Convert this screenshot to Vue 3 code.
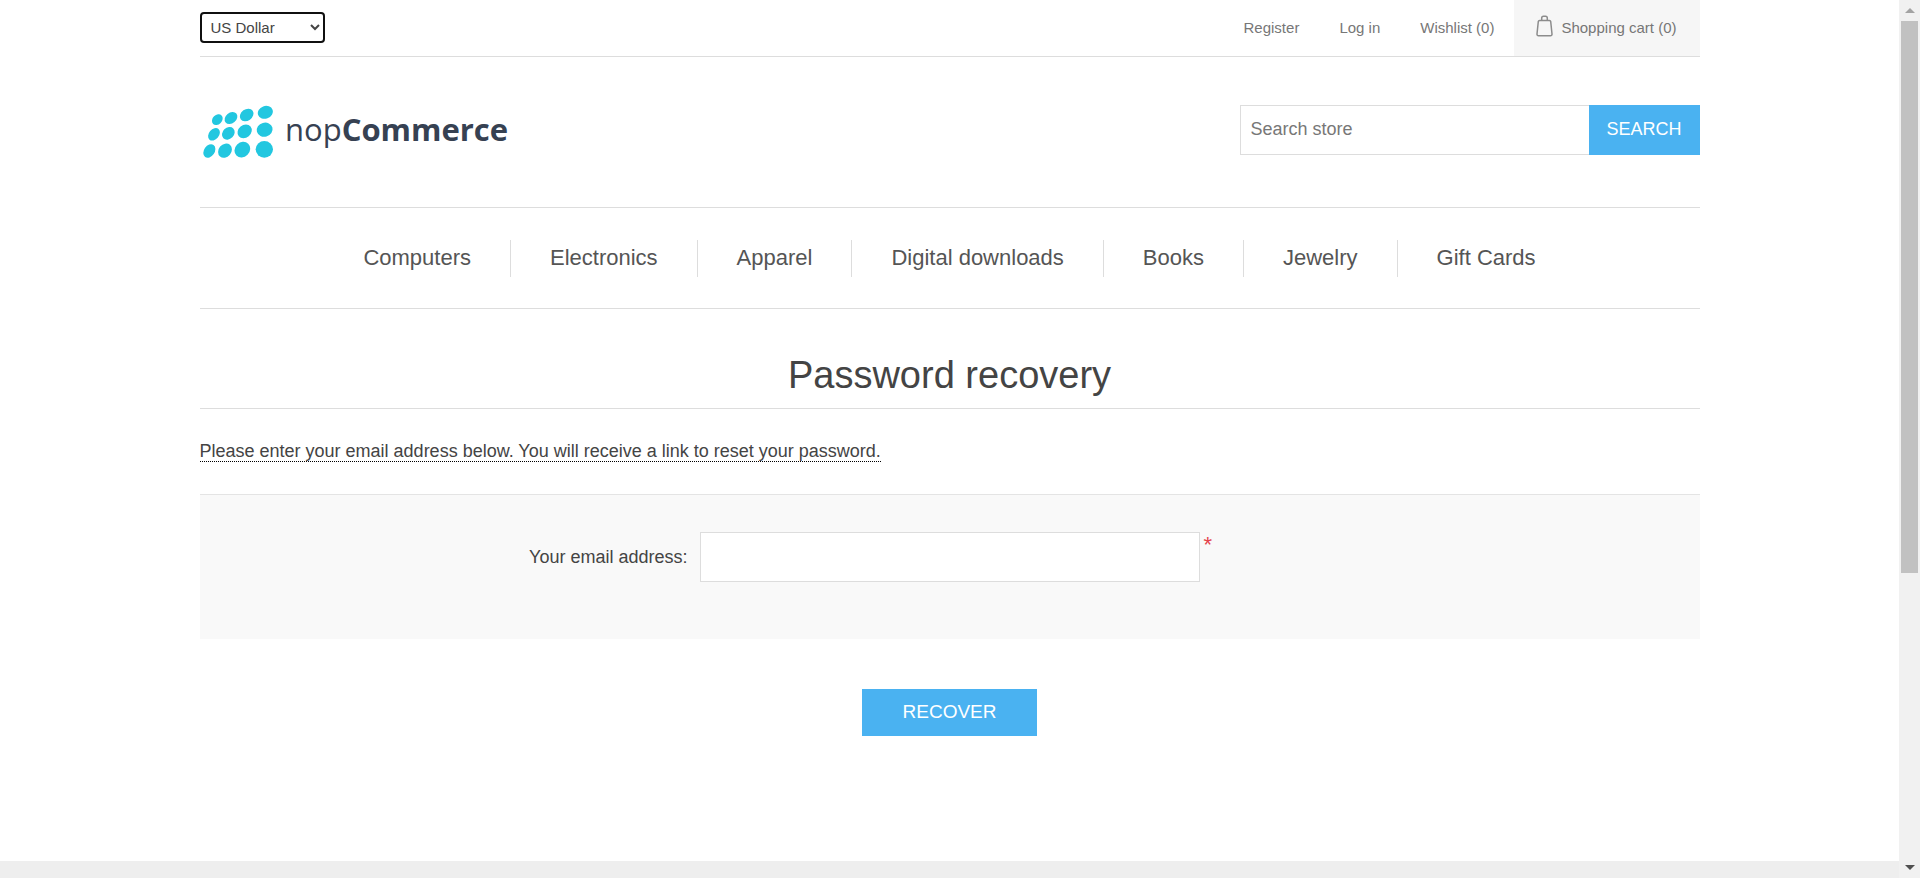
<script setup>
import { ref } from 'vue'

const currency = ref('US Dollar')
const query = ref('')
const email = ref('')

const categories = ['Computers', 'Electronics', 'Apparel', 'Digital downloads', 'Books', 'Jewelry', 'Gift Cards']

// Logo dots: cx, cy, rx, ry, rotation
const dots = [
  [64, 71, 18, 14, -45], [105, 66, 21, 16, -40], [152, 57, 22, 17, -35], [208, 49, 23, 19, -20],
  [54, 115, 21, 15, -50], [97, 112, 21, 17, -45], [146, 106, 23, 19, -40], [206, 101, 24, 21, -15],
  [40, 165, 22, 16, -55], [87, 164, 23, 19, -50], [139, 161, 25, 22, -45], [205, 160, 26, 25, 0],
]
</script>

<template>
  <div class="window">
    <div class="page">
      <div class="wrapper">
        <div class="topbar">
          <select v-model="currency" class="currency" aria-label="Currency selector">
            <option>US Dollar</option>
            <option>Euro</option>
          </select>
          <nav class="links" aria-label="Account">
            <a href="#">Register</a>
            <a href="#">Log in</a>
            <a href="#">Wishlist (0)</a>
            <a href="#" class="cart">
              <svg class="bag" viewBox="0 0 17 22" aria-hidden="true">
                <path d="M3.5 5.5h10q1 0 1.2 1L16 19q.1 1.8-1.6 1.8H2.6Q.9 20.800 1 19L2.300 6.500q.2-1 1.200-1z" />
                <path d="M5.700 5.500V3q0-1.800 1.800-1.800h2q1.800 0 1.800 1.800v2.500" />
              </svg>
              <span>Shopping cart (0)</span>
            </a>
          </nav>
        </div>

        <header class="header">
          <a href="#" class="logo" aria-label="nopCommerce">
            <svg viewBox="12 27 936 162">
              <g fill="#22c7e0">
                <ellipse
                  v-for="(d, i) in dots"
                  :key="i"
                  :cx="d[0]"
                  :cy="d[1]"
                  :rx="d[2]"
                  :ry="d[3]"
                  :transform="`rotate(${d[4]} ${d[0]} ${d[1]})`"
                />
              </g>
              <text x="267" y="134" class="brand">nop<tspan class="strong">Commerce</tspan></text>
            </svg>
          </a>
          <form class="search" @submit.prevent>
            <input v-model="query" type="text" placeholder="Search store" aria-label="Search store">
            <button type="submit">SEARCH</button>
          </form>
        </header>

        <nav class="menu" aria-label="Categories">
          <ul>
            <li v-for="c in categories" :key="c"><a href="#">{{ c }}</a></li>
          </ul>
        </nav>

        <main>
          <h1>Password recovery</h1>
          <p class="tooltip"><span>Please enter your email address below. You will receive a link to reset your password.</span></p>
          <form @submit.prevent>
            <div class="fields">
              <label for="email">Your email address:</label>
              <div class="entry">
                <input id="email" v-model="email" type="email">
                <span class="required">*</span>
              </div>
            </div>
            <div class="actions">
              <button type="submit">RECOVER</button>
            </div>
          </form>
        </main>
      </div>
      <footer class="footer"></footer>
    </div>

    <div class="scrollbar" aria-hidden="true">
      <div class="arrow"><svg viewBox="0 0 10 5"><path d="M0 5 5 0l5 5z" fill="#a3a3a3" /></svg></div>
      <div class="track"><div class="thumb"></div></div>
      <div class="arrow"><svg viewBox="0 0 10 5"><path d="M0 0l5 5 5-5z" fill="#505050" /></svg></div>
    </div>
  </div>
</template>

<style>
body {
  margin: 0;
  background: #fff;
}
</style>

<style scoped>
* {
  box-sizing: border-box;
}

.window {
  display: flex;
  height: 100vh;
  overflow: hidden;
  font-family: "Liberation Sans", Arial, sans-serif;
  font-size: 15px;
  color: #444;
}

input,
select,
button {
  font-family: inherit;
}

a {
  color: inherit;
  text-decoration: none;
}

.page {
  flex: 1;
  min-width: 0;
  display: flex;
  flex-direction: column;
}

.wrapper {
  width: 100%;
  max-width: 1500px;
  margin: 0 auto;
}

.topbar {
  display: flex;
  justify-content: space-between;
  align-items: flex-start;
  border-bottom: 1px solid #ddd;
}

.currency {
  width: 125px;
  height: 31px;
  margin-top: 12px;
  padding: 0 5px;
  border: 2px solid #101010;
  border-radius: 4px;
  background: #fff;
  color: #444;
  font-size: 15px;
}

.links {
  display: flex;
  gap: 40px;
  line-height: 56px;
  color: #777;
}

.cart {
  display: flex;
  align-items: center;
  gap: 8px;
  margin-left: -20px;
  padding: 0 23px 0 22px;
  background: #f6f6f6;
}

.bag {
  width: 17px;
  height: 22px;
  margin-bottom: 4px;
  fill: none;
  stroke: #8c8c8c;
  stroke-width: 1.5;
}

.header {
  display: flex;
  justify-content: space-between;
  align-items: flex-start;
  padding: 48px 0;
}

.logo svg {
  display: block;
  width: 312px;
  height: 54px;
}

.brand {
  font-family: "Open Sans", "Noto Sans", sans-serif;
  font-size: 93px;
  fill: #364152;
}

.strong {
  font-weight: 700;
}

.search {
  display: flex;
  height: 50px;
}

.search input {
  width: 349px;
  padding: 0 10px 2px;
  border: 1px solid #ddd;
  border-right: 0;
  border-radius: 0;
  font-size: 18px;
  color: #777;
  outline: none;
}

.search input::placeholder {
  color: #777;
}

.search button {
  width: 111px;
  padding: 0 0 2px;
  border: 0;
  background: #4ab2f1;
  color: #fff;
  font-size: 18px;
}

.menu {
  padding: 32px 0 31px;
  border-top: 1px solid #ddd;
  border-bottom: 1px solid #ddd;
}

.menu ul {
  display: flex;
  justify-content: center;
  margin: 0;
  padding: 0;
  list-style: none;
}

.menu li {
  padding: 0 39px 2px;
  font-size: 22px;
  line-height: 35px;
  color: #555;
}

.menu li + li {
  border-left: 1px solid #ddd;
}

main {
  padding-bottom: 125px;
}

h1 {
  margin: 0;
  padding: 40px 0 7px;
  border-bottom: 1px solid #ddd;
  font-size: 38px;
  line-height: 52px;
  font-weight: 400;
  text-align: center;
}

.tooltip {
  margin: 31px 0;
  font-size: 18px;
  line-height: 23px;
}

.tooltip span {
  border-bottom: 1px dotted #000;
}

.fields {
  display: grid;
  grid-template-columns: 1fr 500px 1fr;
  column-gap: 4px;
  padding: 37px 0 57px;
  border-top: 1px solid #e4e4e4;
  background: #f9f9f9;
}

.fields label {
  padding-right: 8px;
  font-size: 18px;
  line-height: 50px;
  text-align: right;
}

.entry {
  display: flex;
  grid-column: 2 / 4;
  gap: 4px;
}

.entry input {
  width: 500px;
  height: 50px;
  padding: 0 10px;
  border: 1px solid #ddd;
  border-radius: 0;
  background: #fff;
  font-size: 18px;
}

.required {
  font-size: 22px;
  line-height: 26px;
  color: #e4434b;
}

.actions {
  display: flex;
  justify-content: center;
  padding-top: 50px;
}

.actions button {
  width: 175px;
  height: 47px;
  padding: 0 0 2px;
  border: 0;
  background: #4ab2f1;
  color: #fff;
  font-size: 19px;
}

.footer {
  flex: 1;
  background: #eee;
}

.scrollbar {
  display: flex;
  flex-direction: column;
  width: 21px;
  background: #f1f1f1;
}

.arrow {
  display: flex;
  align-items: center;
  justify-content: center;
  height: 21px;
}

.arrow svg {
  width: 10px;
  height: 5px;
}

.track {
  flex: 1;
  padding: 0 2px;
}

.thumb {
  height: 66%;
  background: #c1c1c1;
}
</style>
